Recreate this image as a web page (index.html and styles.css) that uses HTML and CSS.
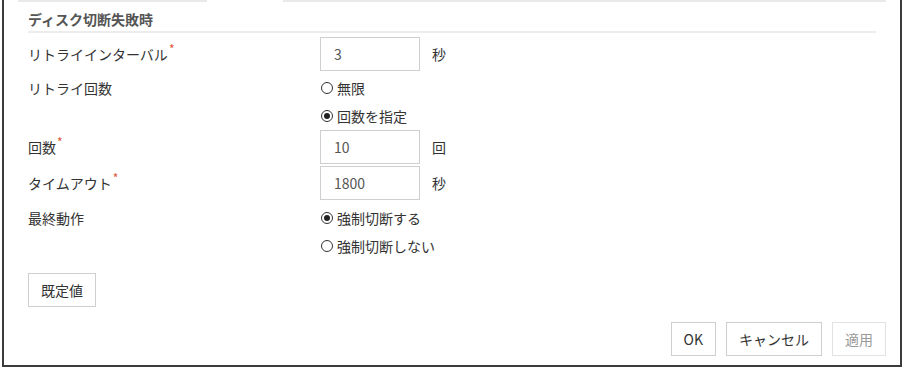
FILE: index.html
```html
<!DOCTYPE html>
<html lang="ja">

<head>
    <meta charset="UTF-8">
    <title>ディスク切断失敗時</title>
    <link rel="stylesheet" href="styles.css">
</head>

<body>
    <div class="frame">
        <!-- 上のタブ区切り線 -->
        <div class="tabline">
            <span class="seg seg-left"></span>
            <span class="seg seg-right"></span>
        </div>

        <div class="section">
            <div class="section-title">ディスク切断失敗時</div>

            <div class="row row-interval">
                <div class="label">リトライインターバル<span class="req">*</span></div>
                <div class="field">
                    <input class="num" type="text" value="3">
                    <span class="unit">秒</span>
                </div>
            </div>

            <div class="row row-retry">
                <div class="label label-opt">リトライ回数</div>
                <div class="options">
                    <label class="radio"><span class="dot"></span>無限</label>
                    <label class="radio"><span class="dot checked"></span>回数を指定</label>
                </div>
            </div>

            <div class="row row-count">
                <div class="label">回数<span class="req">*</span></div>
                <div class="field">
                    <input class="num" type="text" value="10">
                    <span class="unit">回</span>
                </div>
            </div>

            <div class="row">
                <div class="label">タイムアウト<span class="req">*</span></div>
                <div class="field">
                    <input class="num" type="text" value="1800">
                    <span class="unit">秒</span>
                </div>
            </div>

            <div class="row row-final">
                <div class="label label-opt">最終動作</div>
                <div class="options">
                    <label class="radio"><span class="dot checked"></span>強制切断する</label>
                    <label class="radio"><span class="dot"></span>強制切断しない</label>
                </div>
            </div>

            <button class="btn btn-default">既定値</button>
        </div>

        <!-- 下のボタン -->
        <div class="footer">
            <button class="btn">OK</button>
            <button class="btn">キャンセル</button>
            <button class="btn" disabled>適用</button>
        </div>
    </div>
</body>

</html>
```

FILE: styles.css
```css
/* ページ全体 */
body {
    margin: 0;
    padding: 0;
    background: #fff;
    font-family: "Noto Sans CJK JP", "Noto Sans", sans-serif;
    font-size: 14px;
    color: #333;
}

/* 外枠 */
.frame {
    box-sizing: border-box;
    width: 900px;
    height: 367px;
    margin-left: 2px;
    padding: 0 14px;
    border-left: 2px solid #3c3c3c;
    border-right: 2px solid #3c3c3c;
    border-bottom: 2px solid #3c3c3c;
    display: flex;
    flex-direction: column;
}

.tabline {
    display: flex;
    gap: 76px;
    height: 2px;
}

.seg {
    display: block;
    height: 2px;
    background: #e9e9e9;
}

.seg-left {
    width: 189px;
}

.seg-right {
    flex: 1;
}

.section {
    padding: 0 10px;
}

.section-title {
    font-weight: bold;
    color: #555;
    line-height: 20px;
    padding-top: 7px;
    padding-bottom: 2px;
    border-bottom: 2px solid #ececec;
}

/* 行 */
.row {
    display: flex;
    align-items: center;
    margin-top: 2px;
}

.row-interval {
    margin-top: 4px;
}

.row-retry {
    margin-top: 3px;
    align-items: flex-start;
}

.row-count {
    margin-top: 0;
}

.row-final {
    margin-top: 4px;
    align-items: flex-start;
}

.label {
    width: 292px;
    line-height: 20px;
}

.label-opt {
    line-height: 28px;
}

/* 必須マーク */
.req {
    position: relative;
    top: -6px;
    color: #e0533a;
    font-size: 12px;
    line-height: 0;
    margin-left: 1px;
}

.field {
    display: flex;
    align-items: center;
}

.num {
    box-sizing: border-box;
    width: 100px;
    height: 34px;
    padding: 0 0 0 13px;
    border: 1px solid #cfcfcf;
    font-family: inherit;
    font-size: 14px;
    color: #555;
    outline: none;
}

.unit {
    margin-left: 12px;
}

/* ラジオボタン */
.options {
    display: flex;
    flex-direction: column;
}

.radio {
    display: flex;
    align-items: center;
    height: 28px;
}

.dot {
    box-sizing: border-box;
    width: 12px;
    height: 12px;
    margin-left: 1px;
    margin-right: 4px;
    border: 1px solid #333;
    border-radius: 50%;
    position: relative;
}

.dot.checked::after {
    content: "";
    position: absolute;
    left: 2px;
    top: 2px;
    width: 6px;
    height: 6px;
    border-radius: 50%;
    background: #222;
}

/* ボタン */
.btn {
    box-sizing: border-box;
    height: 34px;
    padding: 0 12px;
    background: #fff;
    border: 1px solid #cfcfcf;
    font-family: inherit;
    font-size: 14px;
    color: #333;
    cursor: pointer;
}

.btn:disabled {
    color: #999;
    border-color: #e2e2e2;
    cursor: default;
}

.btn-default {
    display: block;
    margin-top: 13px;
}

.footer {
    display: flex;
    justify-content: flex-end;
    gap: 10px;
    margin-top: 15px;
}
```
